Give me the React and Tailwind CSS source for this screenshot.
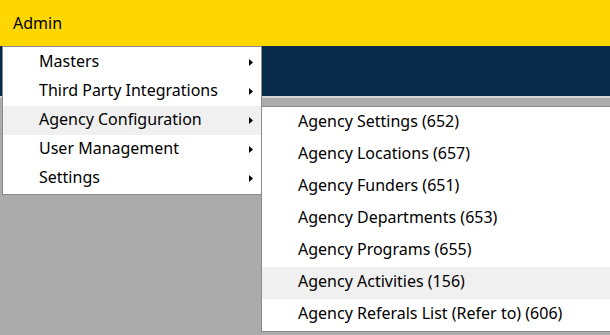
import React from 'react';

const mainItems = [
  { label: 'Masters' },
  { label: 'Third Party Integrations' },
  { label: 'Agency Configuration', active: true },
  { label: 'User Management' },
  { label: 'Settings' },
];

const subItems = [
  { label: 'Agency Settings (652)' },
  { label: 'Agency Locations (657)' },
  { label: 'Agency Funders (651)' },
  { label: 'Agency Departments (653)' },
  { label: 'Agency Programs (655)' },
  { label: 'Agency Activities (156)', active: true },
  { label: 'Agency Referals List (Refer to) (606)' },
];

const Arrow = () => (
  <svg width="4" height="7" viewBox="0 0 4 7" className="absolute left-[246px] top-[11px]">
    <path d="M0 0 L4 3.5 L0 7 Z" fill="#000" />
  </svg>
);

const App = () => {
  return (
    <div
      className="relative flex h-[335px] w-[610px] flex-col overflow-hidden bg-[#ababab] text-[16px] text-black"
      style={{ fontFamily: '"Noto Sans", "Open Sans", sans-serif' }}
    >
      <div className="flex h-[46px] items-center bg-[#ffd700] pl-[13px]">
        <span>Admin</span>
      </div>
      <div className="h-[50px] bg-[#0b2b4b]" />
      <div className="h-[2px] bg-[#d6d6d6]" />

      {/* first level menu */}
      <div className="absolute left-[2px] top-[46px] w-[260px] border border-[#8a8a8a] bg-white py-px">
        {mainItems.map((item) => (
          <div
            key={item.label}
            className={`relative flex h-[29px] items-center pb-[4px] pl-[36px] ${item.active ? 'bg-[#f0f0f0]' : ''}`}
          >
            <span>{item.label}</span>
            <Arrow />
          </div>
        ))}
      </div>

      {/* second level menu */}
      <div className="absolute left-[261px] top-[106px] w-[360px] border border-[#8a8a8a] bg-white">
        {subItems.map((item) => (
          <div
            key={item.label}
            className={`flex h-[32px] items-center pb-[4px] pl-[36px] ${item.active ? 'bg-[#f0f0f0]' : ''}`}
          >
            <span>{item.label}</span>
          </div>
        ))}
      </div>
    </div>
  );
};

export default App;
